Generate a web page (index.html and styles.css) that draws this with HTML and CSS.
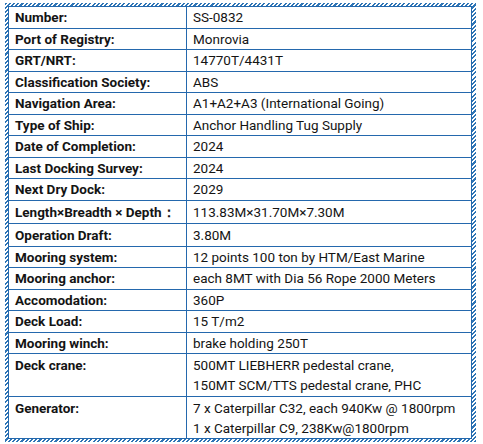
FILE: index.html
```html
<!DOCTYPE html>
<html lang="en">
<head>
    <meta charset="UTF-8">
    <title>Ship Particulars</title>
    <link rel="stylesheet" href="styles.css">
</head>
<body>
    <div class="frame">
        <table class="specs">
            <tr><th>Number:</th><td>SS-0832</td></tr>
            <tr><th>Port of Registry:</th><td>Monrovia</td></tr>
            <tr><th>GRT/NRT:</th><td>14770T/4431T</td></tr>
            <tr><th>Classification Society:</th><td>ABS</td></tr>
            <tr><th>Navigation Area:</th><td>A1+A2+A3 (International Going)</td></tr>
            <tr><th>Type of Ship:</th><td>Anchor Handling Tug Supply</td></tr>
            <tr><th>Date of Completion:</th><td>2024</td></tr>
            <tr><th>Last Docking Survey:</th><td>2024</td></tr>
            <tr><th>Next Dry Dock:</th><td>2029</td></tr>
            <tr class="tall"><th>Length×Breadth × Depth：</th><td>113.83M×31.70M×7.30M</td></tr>
            <tr class="tall"><th>Operation Draft:</th><td>3.80M</td></tr>
            <tr><th>Mooring system:</th><td>12 points 100 ton by HTM/East Marine</td></tr>
            <tr><th>Mooring anchor:</th><td>each 8MT with Dia 56 Rope 2000 Meters</td></tr>
            <tr><th>Accomodation:</th><td>360P</td></tr>
            <tr><th>Deck Load:</th><td>15 T/m2</td></tr>
            <tr><th>Mooring winch:</th><td>brake holding 250T</td></tr>
            <tr class="double"><th>Deck crane:</th><td>500MT LIEBHERR pedestal crane,<br>150MT SCM/TTS pedestal crane, PHC</td></tr>
            <tr class="last"><th>Generator:</th><td>7 x Caterpillar C32, each 940Kw @ 1800rpm<br>1 x Caterpillar C9, 238Kw@1800rpm</td></tr>
        </table>
    </div>
</body>
</html>
```

FILE: styles.css
```css
* {
    margin: 0;
    padding: 0;
    box-sizing: border-box;
}

body {
    font-family: Roboto, "Liberation Sans", sans-serif;
    font-size: 13.5px;
    color: #141414;
    background: #fff;
}

.frame {
    width: 471px;
    margin: 3px 0 0 5px;
    padding: 3px 4px 3px 3px;
    background: repeating-linear-gradient(135deg, #2e75b6 0 1.5px, #fff 1.5px 3px);
}

.specs {
    width: 100%;
    border-collapse: collapse;
    background: #fff;
}

.specs tr {
    height: 21.5px;
}

.specs th,
.specs td {
    border: 1px solid #2468ad;
    padding: 0 6px;
    line-height: 20px;
    text-align: left;
    vertical-align: top;
}

.specs th {
    width: 178px;
    font-weight: 700;
}

.specs td {
    font-weight: 400;
}

.specs .tall {
    height: 23px;
}

.specs .tall th,
.specs .tall td,
.specs .double th,
.specs .double td,
.specs .last th,
.specs .last td {
    padding-top: 1px;
}

.specs .double {
    height: 43px;
}

.specs .last {
    height: 40px;
}
```
